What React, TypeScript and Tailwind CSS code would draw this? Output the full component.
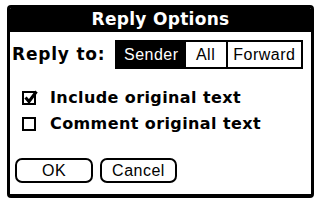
import React from 'react';

const bold = { fontFamily: '"DejaVu Sans", sans-serif' };
const plain = { fontFamily: '"Liberation Sans", Arial, sans-serif' };

const CheckBox = ({ checked }: { checked: boolean }) => (
  <svg width="15" height="16" viewBox="0 0 15 16" className="shrink-0 overflow-visible">
    <rect x="1" y="2" width="12" height="12" fill="white" stroke="black" strokeWidth="2" />
    {checked && <path d="M3.5 7.5 L7 11.5 L14.5 1.5" fill="none" stroke="black" strokeWidth="3" />}
  </svg>
);

const Segment = ({ label, active, first, last }: { label: string; active?: boolean; first?: boolean; last?: boolean }) => (
  <div
    className={`flex h-full items-center justify-center text-[16px] tracking-[0.5px] ${
      active ? 'bg-black text-white' : 'bg-white text-black'
    } ${first ? 'w-[70px]' : last ? 'w-[77px] border-l-2 border-black' : 'w-[41px]'}`}
    style={plain}
  >
    {label}
  </div>
);

const PalmButton = ({ label, width }: { label: string; width: string }) => (
  <button
    className={`${width} flex h-[25px] items-center justify-center rounded-[7px] border-2 border-black bg-white text-[16px] tracking-[0.5px] text-black`}
    style={plain}
  >
    {label}
  </button>
);

export default function App() {
  return (
    <div className="h-[201px] w-[317px] bg-white pl-[7px] pt-[5px]">
      <div className="flex h-[193px] w-[307px] flex-col overflow-hidden rounded-[4px] border-[3px] border-b-4 border-black bg-white">
        <div
          className="flex h-[24px] shrink-0 items-center justify-center bg-black text-[17px] font-bold tracking-[0.3px] text-white"
          style={bold}
        >
          Reply Options
        </div>

        <div className="mt-[8px] flex h-[29px] items-center">
          <div className="w-[105px] pl-[2px] text-[17px] font-bold tracking-[0.8px]" style={bold}>
            Reply to:
          </div>
          <div className="flex h-[29px] w-[188px] border-2 border-black">
            <Segment label="Sender" active first />
            <Segment label="All" />
            <Segment label="Forward" last />
          </div>
        </div>

        <div className="mt-[16px] flex flex-col pl-[12px]">
          <div className="flex h-[26px] items-center gap-[13px]">
            <CheckBox checked />
            <span className="text-[16px] font-bold tracking-[0.4px]" style={bold}>
              Include original text
            </span>
          </div>
          <div className="flex h-[26px] items-center gap-[13px]">
            <CheckBox checked={false} />
            <span className="text-[16px] font-bold tracking-[0.4px]" style={bold}>
              Comment original text
            </span>
          </div>
        </div>

        <div className="mt-[21px] flex gap-[7px] pl-[5px]">
          <PalmButton label="OK" width="w-[78px]" />
          <PalmButton label="Cancel" width="w-[77px]" />
        </div>
      </div>
    </div>
  );
}
